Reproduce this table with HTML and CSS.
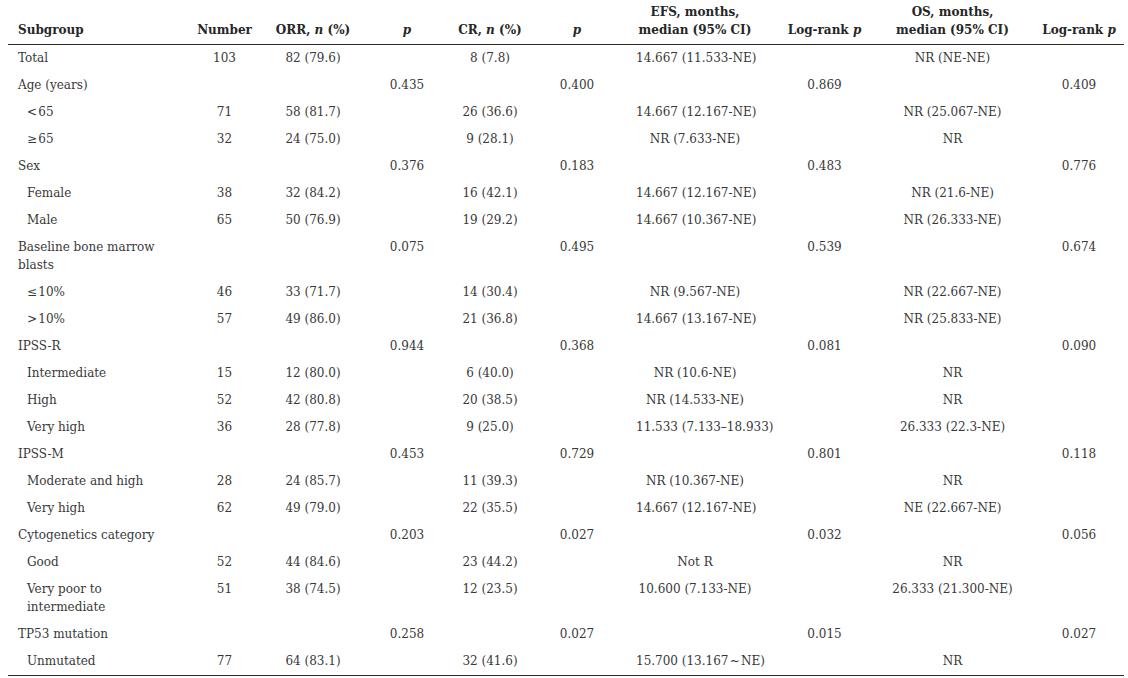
FILE: index.html
```html
<!DOCTYPE html>
<html lang="en">
<head>
<meta charset="utf-8">
<title>Subgroup analysis</title>
<link rel="stylesheet" href="styles.css">
</head>
<body>
<div class="page">
<table class="results">
  <colgroup>
    <col class="c-sub"><col class="c-num"><col class="c-orr"><col class="c-p1"><col class="c-cr"><col class="c-p2"><col class="c-efs"><col class="c-lr1"><col class="c-os"><col class="c-lr2">
  </colgroup>
  <thead>
    <tr>
      <th class="sub">Subgroup</th>
      <th class="num">Number</th>
      <th class="orr">ORR, <i>n</i> (%)</th>
      <th class="p1"><i>p</i></th>
      <th class="cr">CR, <i>n</i> (%)</th>
      <th class="p2"><i>p</i></th>
      <th class="efs">EFS, months,<br>median (95% CI)</th>
      <th class="lr1">Log-rank <i>p</i></th>
      <th class="os">OS, months,<br>median (95% CI)</th>
      <th class="lr2">Log-rank <i>p</i></th>
    </tr>
  </thead>
  <tbody>
    <tr><td class="sub">Total</td><td class="num">103</td><td class="orr">82 (79.6)</td><td class="p1"></td><td class="cr">8 (7.8)</td><td class="p2"></td><td class="efs">14.667 (11.533-NE)</td><td class="lr1"></td><td class="os">NR (NE-NE)</td><td class="lr2"></td></tr>
    <tr><td class="sub">Age (years)</td><td class="num"></td><td class="orr"></td><td class="p1">0.435</td><td class="cr"></td><td class="p2">0.400</td><td class="efs"></td><td class="lr1">0.869</td><td class="os"></td><td class="lr2">0.409</td></tr>
    <tr><td class="sub level">&lt;&#8202;65</td><td class="num">71</td><td class="orr">58 (81.7)</td><td class="p1"></td><td class="cr">26 (36.6)</td><td class="p2"></td><td class="efs">14.667 (12.167-NE)</td><td class="lr1"></td><td class="os">NR (25.067-NE)</td><td class="lr2"></td></tr>
    <tr><td class="sub level">&ge;&#8202;65</td><td class="num">32</td><td class="orr">24 (75.0)</td><td class="p1"></td><td class="cr">9 (28.1)</td><td class="p2"></td><td class="efs">NR (7.633-NE)</td><td class="lr1"></td><td class="os">NR</td><td class="lr2"></td></tr>
    <tr><td class="sub">Sex</td><td class="num"></td><td class="orr"></td><td class="p1">0.376</td><td class="cr"></td><td class="p2">0.183</td><td class="efs"></td><td class="lr1">0.483</td><td class="os"></td><td class="lr2">0.776</td></tr>
    <tr><td class="sub level">Female</td><td class="num">38</td><td class="orr">32 (84.2)</td><td class="p1"></td><td class="cr">16 (42.1)</td><td class="p2"></td><td class="efs">14.667 (12.167-NE)</td><td class="lr1"></td><td class="os">NR (21.6-NE)</td><td class="lr2"></td></tr>
    <tr><td class="sub level">Male</td><td class="num">65</td><td class="orr">50 (76.9)</td><td class="p1"></td><td class="cr">19 (29.2)</td><td class="p2"></td><td class="efs">14.667 (10.367-NE)</td><td class="lr1"></td><td class="os">NR (26.333-NE)</td><td class="lr2"></td></tr>
    <tr><td class="sub">Baseline bone marrow blasts</td><td class="num"></td><td class="orr"></td><td class="p1">0.075</td><td class="cr"></td><td class="p2">0.495</td><td class="efs"></td><td class="lr1">0.539</td><td class="os"></td><td class="lr2">0.674</td></tr>
    <tr><td class="sub level">&le;&#8202;10%</td><td class="num">46</td><td class="orr">33 (71.7)</td><td class="p1"></td><td class="cr">14 (30.4)</td><td class="p2"></td><td class="efs">NR (9.567-NE)</td><td class="lr1"></td><td class="os">NR (22.667-NE)</td><td class="lr2"></td></tr>
    <tr><td class="sub level">&gt;&#8202;10%</td><td class="num">57</td><td class="orr">49 (86.0)</td><td class="p1"></td><td class="cr">21 (36.8)</td><td class="p2"></td><td class="efs">14.667 (13.167-NE)</td><td class="lr1"></td><td class="os">NR (25.833-NE)</td><td class="lr2"></td></tr>
    <tr><td class="sub">IPSS-R</td><td class="num"></td><td class="orr"></td><td class="p1">0.944</td><td class="cr"></td><td class="p2">0.368</td><td class="efs"></td><td class="lr1">0.081</td><td class="os"></td><td class="lr2">0.090</td></tr>
    <tr><td class="sub level">Intermediate</td><td class="num">15</td><td class="orr">12 (80.0)</td><td class="p1"></td><td class="cr">6 (40.0)</td><td class="p2"></td><td class="efs">NR (10.6-NE)</td><td class="lr1"></td><td class="os">NR</td><td class="lr2"></td></tr>
    <tr><td class="sub level">High</td><td class="num">52</td><td class="orr">42 (80.8)</td><td class="p1"></td><td class="cr">20 (38.5)</td><td class="p2"></td><td class="efs">NR (14.533-NE)</td><td class="lr1"></td><td class="os">NR</td><td class="lr2"></td></tr>
    <tr><td class="sub level">Very high</td><td class="num">36</td><td class="orr">28 (77.8)</td><td class="p1"></td><td class="cr">9 (25.0)</td><td class="p2"></td><td class="efs">11.533 (7.133&ndash;18.933)</td><td class="lr1"></td><td class="os">26.333 (22.3-NE)</td><td class="lr2"></td></tr>
    <tr><td class="sub">IPSS-M</td><td class="num"></td><td class="orr"></td><td class="p1">0.453</td><td class="cr"></td><td class="p2">0.729</td><td class="efs"></td><td class="lr1">0.801</td><td class="os"></td><td class="lr2">0.118</td></tr>
    <tr><td class="sub level">Moderate and high</td><td class="num">28</td><td class="orr">24 (85.7)</td><td class="p1"></td><td class="cr">11 (39.3)</td><td class="p2"></td><td class="efs">NR (10.367-NE)</td><td class="lr1"></td><td class="os">NR</td><td class="lr2"></td></tr>
    <tr><td class="sub level">Very high</td><td class="num">62</td><td class="orr">49 (79.0)</td><td class="p1"></td><td class="cr">22 (35.5)</td><td class="p2"></td><td class="efs">14.667 (12.167-NE)</td><td class="lr1"></td><td class="os">NE (22.667-NE)</td><td class="lr2"></td></tr>
    <tr><td class="sub">Cytogenetics category</td><td class="num"></td><td class="orr"></td><td class="p1">0.203</td><td class="cr"></td><td class="p2">0.027</td><td class="efs"></td><td class="lr1">0.032</td><td class="os"></td><td class="lr2">0.056</td></tr>
    <tr><td class="sub level">Good</td><td class="num">52</td><td class="orr">44 (84.6)</td><td class="p1"></td><td class="cr">23 (44.2)</td><td class="p2"></td><td class="efs">Not R</td><td class="lr1"></td><td class="os">NR</td><td class="lr2"></td></tr>
    <tr><td class="sub level">Very poor to intermediate</td><td class="num">51</td><td class="orr">38 (74.5)</td><td class="p1"></td><td class="cr">12 (23.5)</td><td class="p2"></td><td class="efs">10.600 (7.133-NE)</td><td class="lr1"></td><td class="os">26.333 (21.300-NE)</td><td class="lr2"></td></tr>
    <tr><td class="sub">TP53 mutation</td><td class="num"></td><td class="orr"></td><td class="p1">0.258</td><td class="cr"></td><td class="p2">0.027</td><td class="efs"></td><td class="lr1">0.015</td><td class="os"></td><td class="lr2">0.027</td></tr>
    <tr><td class="sub level">Unmutated</td><td class="num">77</td><td class="orr">64 (83.1)</td><td class="p1"></td><td class="cr">32 (41.6)</td><td class="p2"></td><td class="efs">15.700 (13.167&#8202;~&#8202;NE)</td><td class="lr1"></td><td class="os">NR</td><td class="lr2"></td></tr>
  </tbody>
</table>
</div>
</body>
</html>
```

FILE: styles.css
```css
html, body {
  margin: 0;
  padding: 0;
  background: #ffffff;
}

.page {
  padding: 1px 0 0 8px;
}

.results {
  border-collapse: collapse;
  table-layout: fixed;
  width: 1116px;
  font-family: "DejaVu Serif", "Liberation Serif", serif;
  font-size: 12px;
  line-height: 18px;
  color: #383838;
}

.c-sub { width: 172px; }
.c-num { width: 89px; }
.c-orr { width: 91px; }
.c-p1  { width: 89px; }
.c-cr  { width: 85px; }
.c-p2  { width: 102px; }
.c-efs { width: 124px; }
.c-lr1 { width: 129px; }
.c-os  { width: 127px; }
.c-lr2 { width: 108px; }

.results th {
  font-weight: bold;
  color: #262626;
  vertical-align: bottom;
  padding: 2px 0 5px 0;
  border-bottom: 1px solid #2b2b2b;
  white-space: nowrap;
  text-align: center;
}

.results td {
  vertical-align: top;
  padding: 4px 0 5px 0;
  text-align: center;
  white-space: nowrap;
}

.results tbody tr:last-child td {
  border-bottom: 1px solid #2b2b2b;
}

.results .sub {
  text-align: left;
  padding-left: 10px;
  padding-right: 20px;
  white-space: normal;
}

.results td.level {
  padding-left: 19px;
}

.results .orr { padding-right: 3px; }
.results .p1  { padding-left: 5px; }
.results .cr  { padding-right: 3px; }
.results .p2  { padding-right: 16px; }
.results .efs { padding-right: 6px; }
.results .lr2 { padding-left: 18px; }
```
